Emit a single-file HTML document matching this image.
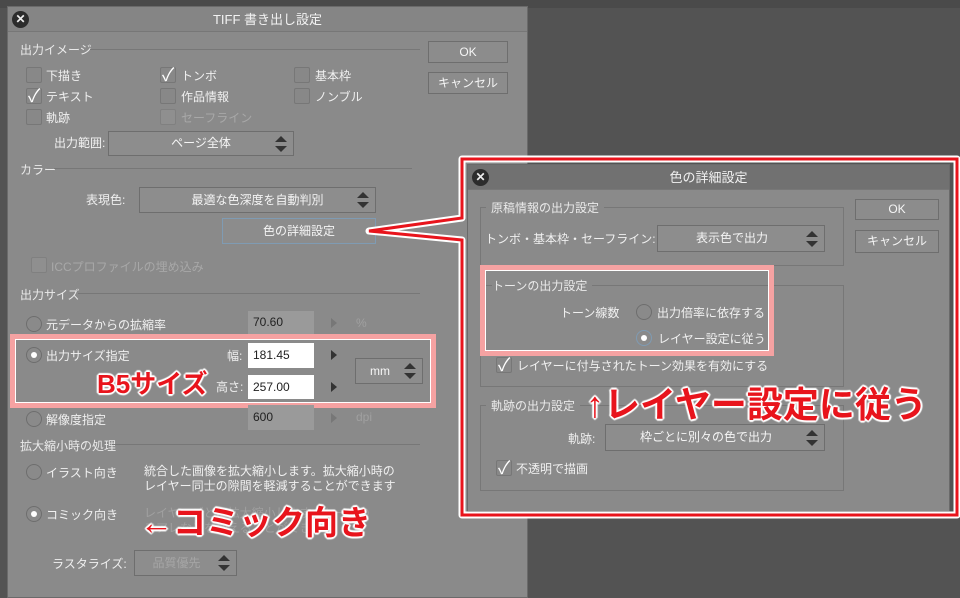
<!DOCTYPE html>
<html><head><meta charset="utf-8"><style>
*{margin:0;padding:0;box-sizing:border-box}
body{width:960px;height:595px;background:#535353;position:relative;overflow:hidden;font-family:"Liberation Sans","Noto Sans CJK JP",sans-serif;font-size:12px;color:#222}
.a{position:absolute;white-space:nowrap}
.dlg{position:absolute;background:#8a8a8a;border:1px solid #6a6a6a}
.tb{position:absolute;left:0;right:0;top:0;height:25px;background:#858585;border-bottom:1px solid #777;text-align:center;line-height:25px;font-size:13px;color:#f2f2f2}
.x{position:absolute;width:17px;height:17px;border-radius:50%;background:#2c2c2c;color:#eee;font-size:12px;line-height:17px;text-align:center;font-weight:bold}
.sec{position:absolute;color:#eaeaea;font-size:12px}
.ln{position:absolute;height:1px;background:#a0a0a0;border-top:1px solid #777}
.btn{position:absolute;border:1px solid #6e6e6e;background:#8c8c8c;color:#f5f5f5;text-align:center;font-size:12px}
.cb{position:absolute;width:16px;height:16px;border:1px solid #777;background:#888;border-radius:2px}
.lb{position:absolute;color:#f0f0f0;white-space:nowrap}
.dd{position:absolute;border:1px solid #6e6e6e;background:#8d8d8d;color:#f5f5f5;text-align:center;font-size:12px}
.dd:after{content:"";position:absolute;right:6px;top:50%;margin-top:-8px;width:0;height:0;border-left:6px solid transparent;border-right:6px solid transparent;border-bottom:6px solid #333}
.dd:before{content:"";position:absolute;right:6px;top:50%;margin-top:2px;width:0;height:0;border-left:6px solid transparent;border-right:6px solid transparent;border-top:6px solid #333}
.rd{position:absolute;width:16px;height:16px;border-radius:50%;border:1px solid #6e6e6e;background:#8a8a8a}
.rd.on:after{content:"";position:absolute;left:4px;top:4px;width:6px;height:6px;border-radius:50%;background:#fff}
.in{position:absolute;background:#9a9a9a;color:#222;padding-left:5px;font-size:12px}
.tri{position:absolute;width:0;height:0;border-top:5px solid transparent;border-bottom:5px solid transparent;border-left:6px solid #333}
.ck{position:absolute;color:#fff;font-size:18px;line-height:16px}
.gb{position:absolute;border:1px solid #777;border-bottom-color:#777}
.big{position:absolute;color:#e8141c;font-weight:bold;white-space:nowrap;text-shadow:0 0 2px #fff,0 0 2px #fff,1px 1px 1px #fff,-1px -1px 1px #fff,1px -1px 1px #fff,-1px 1px 1px #fff,2px 0 1px #fff,-2px 0 1px #fff,0 2px 1px #fff,0 -2px 1px #fff}
</style></head><body>
<div style="position:absolute;left:0;top:0;width:960px;height:8px;background:#4a4a4a"></div>
<div class="dlg" style="left:7px;top:6px;width:521px;height:592px">
 <div class="tb">TIFF 書き出し設定</div>
 <div class="x" style="left:4px;top:4px">✕</div>
</div>
<div class="sec" style="left:20px;top:41px">出力イメージ</div><div class="ln" style="left:90px;top:49px;width:330px"></div>
<div class="btn" style="left:428px;top:41px;width:80px;height:22px;line-height:20px">OK</div>
<div class="btn" style="left:428px;top:72px;width:80px;height:22px;line-height:20px">キャンセル</div>
<div class="cb" style="left:26px;top:67px"></div><div class="lb" style="left:46px;top:67px">下描き</div>
<div class="cb" style="left:26px;top:88px"></div><div class="ck" style="left:28px;top:88px">✓</div><div class="lb" style="left:46px;top:88px">テキスト</div>
<div class="cb" style="left:26px;top:109px"></div><div class="lb" style="left:46px;top:109px">軌跡</div>
<div class="cb" style="left:160px;top:67px"></div><div class="ck" style="left:162px;top:67px">✓</div><div class="lb" style="left:181px;top:67px">トンボ</div>
<div class="cb" style="left:160px;top:88px"></div><div class="lb" style="left:181px;top:88px">作品情報</div>
<div class="cb" style="left:160px;top:109px;background:#8f8f8f;border-color:#808080"></div><div class="lb" style="left:181px;top:109px;color:#a8a8a8">セーフライン</div>
<div class="cb" style="left:294px;top:67px"></div><div class="lb" style="left:315px;top:67px">基本枠</div>
<div class="cb" style="left:294px;top:88px"></div><div class="lb" style="left:315px;top:88px">ノンブル</div>
<div class="lb" style="left:54px;top:134px">出力範囲:</div>
<div class="dd" style="left:108px;top:131px;width:186px;height:25px;line-height:23px">ページ全体</div>
<div class="sec" style="left:20px;top:161px">カラー</div><div class="ln" style="left:54px;top:168px;width:358px"></div>
<div class="lb" style="left:86px;top:191px">表現色:</div>
<div class="dd" style="left:139px;top:187px;width:237px;height:26px;line-height:24px">最適な色深度を自動判別</div>
<div class="btn" style="left:222px;top:218px;width:154px;height:26px;line-height:24px;border-color:#7f9bb3">色の詳細設定</div>
<div class="cb" style="left:31px;top:257px;background:#8f8f8f;border-color:#808080"></div><div class="lb" style="left:51px;top:258px;color:#a8a8a8">ICCプロファイルの埋め込み</div>
<div class="sec" style="left:20px;top:286px">出力サイズ</div><div class="ln" style="left:78px;top:293px;width:342px"></div>
<div class="rd" style="left:26px;top:316px"></div><div class="lb" style="left:46px;top:316px">元データからの拡縮率</div>
<div class="in" style="left:248px;top:311px;width:66px;height:23px;line-height:23px">70.60</div>
<div class="tri" style="left:331px;top:318px;border-left-color:#777"></div><div class="lb" style="left:356px;top:316px;color:#a0a0a0">%</div>
<div class="rd on" style="left:26px;top:347px"></div><div class="lb" style="left:46px;top:347px">出力サイズ指定</div>
<div class="lb" style="left:227px;top:347px">幅:</div>
<div class="in" style="left:248px;top:343px;width:66px;height:25px;line-height:25px;background:#fff">181.45</div>
<div class="tri" style="left:331px;top:350px"></div>
<div class="lb" style="left:216px;top:378px">高さ:</div>
<div class="in" style="left:248px;top:375px;width:66px;height:24px;line-height:24px;background:#fff">257.00</div>
<div class="tri" style="left:331px;top:382px"></div>
<div class="dd" style="left:355px;top:358px;width:68px;height:26px;line-height:24px;padding-right:18px">mm</div>
<div style="position:absolute;left:10px;top:334px;width:426px;height:74px;border:5px solid #f5a2a2"></div>
<div style="position:absolute;left:15px;top:339px;width:416px;height:64px;border:1px solid #fff"></div>
<div class="big" style="left:97px;top:364px;font-size:26px">B5サイズ</div>
<div class="rd" style="left:26px;top:411px"></div><div class="lb" style="left:46px;top:411px">解像度指定</div>
<div class="in" style="left:248px;top:405px;width:66px;height:25px;line-height:25px">600</div>
<div class="tri" style="left:331px;top:413px;border-left-color:#777"></div><div class="lb" style="left:356px;top:410px;color:#a0a0a0">dpi</div>
<div class="sec" style="left:20px;top:437px">拡大縮小時の処理</div><div class="ln" style="left:112px;top:444px;width:308px"></div>
<div class="rd" style="left:26px;top:464px"></div><div class="lb" style="left:46px;top:464px">イラスト向き</div>
<div class="lb" style="left:144px;top:464px;line-height:15px">統合した画像を拡大縮小します。拡大縮小時の<br>レイヤー同士の隙間を軽減することができます</div>
<div class="rd on" style="left:26px;top:506px"></div><div class="lb" style="left:46px;top:506px">コミック向き</div>
<div class="lb" style="left:144px;top:506px;line-height:15px;color:#a0a0a0">レイヤーごとに拡大縮小します。トーンの<br>モアレなどを抑えることができます</div>
<div class="big" style="left:140px;top:496px;font-size:33px">←コミック向き</div>
<div class="lb" style="left:52px;top:555px">ラスタライズ:</div>
<div class="dd" style="left:134px;top:550px;width:103px;height:26px;line-height:24px;color:#a5a5a5;padding-right:18px">品質優先</div>

<div class="dlg" style="left:467px;top:164px;width:483px;height:348px">
 <div class="tb" style="background:#717171">色の詳細設定</div>
 <div class="x" style="left:4px;top:4px">✕</div>
</div>
<svg class="a" style="left:0;top:0" width="960" height="595">
<polygon points="462,240 462,515 957,515 957,159 462,159 462,218 369,231" fill="none" stroke="#fff" stroke-width="7" stroke-linejoin="round"/>
<polygon points="462,240 462,515 957,515 957,159 462,159 462,218 369,231" fill="none" stroke="#e8141c" stroke-width="3"/>
</svg>
<div class="gb" style="left:480px;top:207px;width:364px;height:59px"></div>
<div class="sec" style="left:486px;top:199px;background:#8a8a8a;padding:0 5px">原稿情報の出力設定</div>
<div class="lb" style="left:485px;top:230px">トンボ・基本枠・セーフライン:</div>
<div class="dd" style="left:657px;top:225px;width:168px;height:27px;line-height:25px;padding-right:18px">表示色で出力</div>
<div class="btn" style="left:855px;top:199px;width:84px;height:21px;line-height:19px">OK</div>
<div class="btn" style="left:855px;top:230px;width:84px;height:23px;line-height:21px">キャンセル</div>
<div class="gb" style="left:480px;top:285px;width:364px;height:102px"></div>
<div class="sec" style="left:492px;top:277px;background:#8a8a8a;padding-right:5px">トーンの出力設定</div>
<div class="lb" style="left:560px;top:304px">トーン線数</div>
<div class="rd" style="left:636px;top:304px"></div><div class="lb" style="left:657px;top:304px">出力倍率に依存する</div>
<div class="rd on" style="left:636px;top:330px;border-color:#7f9bb3"></div><div class="lb" style="left:658px;top:330px">レイヤー設定に従う</div>
<div style="position:absolute;left:480px;top:265px;width:294px;height:91px;border:5px solid #f5a2a2"></div>
<div style="position:absolute;left:485px;top:270px;width:284px;height:81px;border:1px solid #fff"></div>
<div class="cb" style="left:496px;top:357px"></div><div class="ck" style="left:498px;top:357px">✓</div><div class="lb" style="left:517px;top:357px">レイヤーに付与されたトーン効果を有効にする</div>
<div class="gb" style="left:480px;top:405px;width:364px;height:86px"></div>
<div class="sec" style="left:486px;top:397px;background:#8a8a8a;padding:0 5px">軌跡の出力設定</div>
<div class="lb" style="left:568px;top:430px">軌跡:</div>
<div class="dd" style="left:605px;top:424px;width:220px;height:27px;line-height:25px;padding-right:18px">枠ごとに別々の色で出力</div>
<div class="cb" style="left:496px;top:460px"></div><div class="ck" style="left:498px;top:460px">✓</div><div class="lb" style="left:516px;top:460px">不透明で描画</div>
<div class="big" style="left:586px;top:376px;font-size:36px">↑レイヤー設定に従う</div>
</body></html>
